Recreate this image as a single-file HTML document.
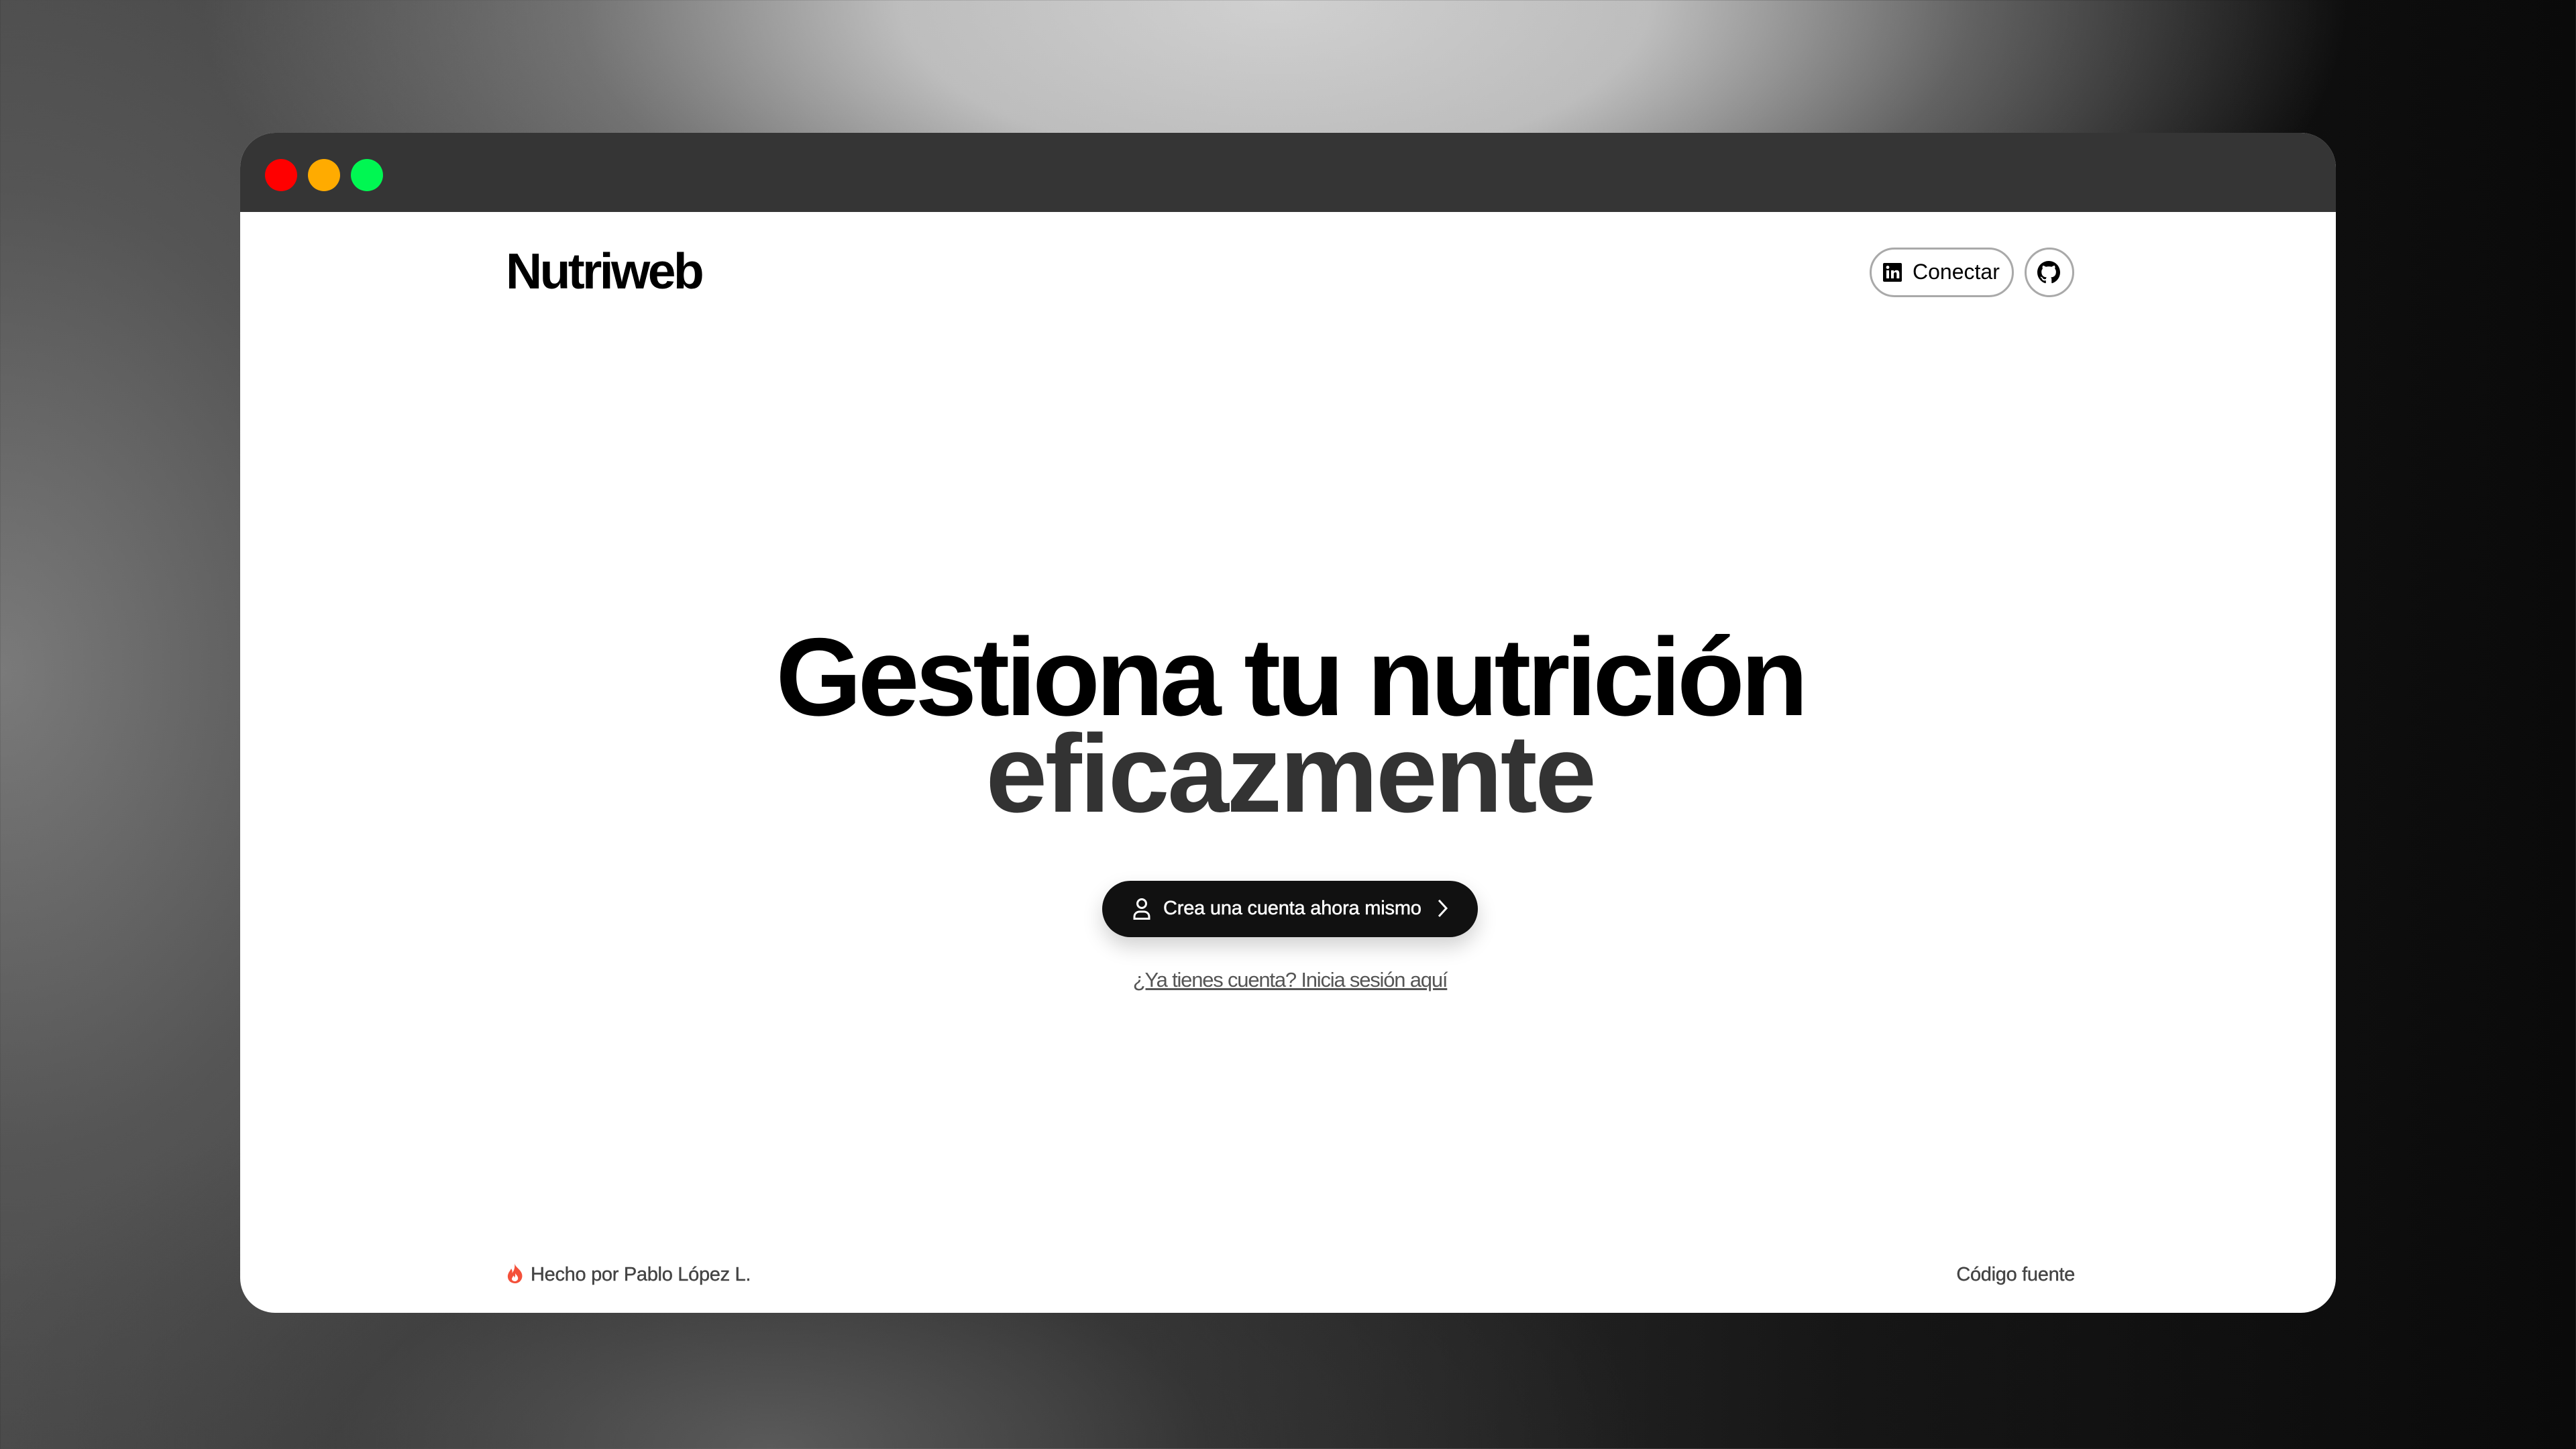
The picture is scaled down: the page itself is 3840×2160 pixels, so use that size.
<!DOCTYPE html>
<html><head><meta charset="utf-8"><style>
*{margin:0;padding:0;box-sizing:border-box}
html,body{width:3840px;height:2160px;overflow:hidden}
body{font-family:"Liberation Sans",Arial,sans-serif;position:relative;
background:
radial-gradient(ellipse 1600px 700px at 1900px 0px,#d0d0d0 0%,#bdbdbd 35%,rgba(150,150,150,0.6) 65%,rgba(120,120,120,0) 100%),
radial-gradient(ellipse 1300px 600px at 1150px 2160px,#5a5a5a 0%,rgba(60,60,60,0.5) 50%,rgba(30,30,30,0) 100%),
radial-gradient(ellipse 1200px 1600px at 0px 1000px,#7a7a7a 0%,#555 45%,rgba(40,40,40,0) 100%),
linear-gradient(90deg,#444 0%,#333 40%,#161616 72%,#0a0a0a 100%);}
.win{position:absolute;left:358px;top:198px;width:3124px;height:1759px;border-radius:52px;overflow:hidden;background:#fff}
.bar{position:absolute;left:0;top:0;width:100%;height:118px;background:#353535}
.dot{position:absolute;top:39px;width:48px;height:48px;border-radius:50%}
.a{position:absolute;white-space:nowrap}
</style></head><body>
<div class="win">
  <div class="bar">
    <div class="dot" style="left:37px;background:#ff0000"></div>
    <div class="dot" style="left:101px;background:#ffab00"></div>
    <div class="dot" style="left:165px;background:#00f752"></div>
  </div>
</div>

<div class="a" style="left:754px;top:367px;font-size:75px;line-height:75px;font-weight:bold;letter-spacing:-3.6px;color:#000">Nutriweb</div>

<div class="a" style="left:2787px;top:369px;width:215px;height:74px;border:3px solid #a9a9a9;border-radius:40px"></div>
<svg class="a" style="left:2807px;top:392px" width="28" height="28" viewBox="0 0 28 28">
  <rect x="0" y="0" width="28" height="28" rx="2" fill="#000"/>
  <rect x="5" y="11" width="4" height="12" fill="#fff"/>
  <circle cx="7" cy="6.5" r="2.4" fill="#fff"/>
  <path d="M12 11h4v2c1-1.6 2.5-2.3 4.3-2.3 3 0 4 2 4 5V23h-4v-6.5c0-1.6-.5-2.6-1.9-2.6-1.5 0-2.4 1-2.4 2.7V23h-4z" fill="#fff"/>
</svg>
<div class="a" style="left:2851px;top:389px;font-size:32px;line-height:32px;color:#000">Conectar</div>

<div class="a" style="left:3018px;top:369px;width:74px;height:74px;border:3px solid #a9a9a9;border-radius:50%"></div>
<svg class="a" style="left:3037px;top:389px" width="34" height="34" viewBox="0 0 16 16"><path fill="#000" d="M8 0C3.58 0 0 3.580 0 8c0 3.54 2.29 6.53 5.47 7.59.4.07.55-.17.55-.38 0-.19-.01-.82-.01-1.49-2.01.37-2.530-.49-2.69-.94-.09-.23-.48-.94-.82-1.13-.28-.15-.68-.52-.01-.53.63-.01 1.08.58 1.23.82.72 1.21 1.87.87 2.33.66.07-.52.28-.87.51-1.07-1.78-.2-3.64-.89-3.64-3.95 0-.87.31-1.59.82-2.15-.08-.2-.36-1.02.08-2.12 0 0 .67-.21 2.2.82.64-.18 1.32-.27 2-.27.68 0 1.36.09 2 .27 1.53-1.04 2.2-.82 2.2-.82.44 1.1.16 1.92.08 2.12.51.56.82 1.27.82 2.15 0 3.07-1.87 3.75-3.65 3.95.29.25.54.73.54 1.48 0 1.07-.01 1.93-.01 2.2 0 .21.15.46.55.38A8.013 8.013 0 0016 8c0-4.42-3.58-8-8-8z"/></svg>

<div class="a" style="left:3px;width:3840px;text-align:center;top:927px;font-size:165px;line-height:165px;font-weight:bold;letter-spacing:-6px;color:#000">Gestiona tu nutrición</div>
<div class="a" style="left:3px;width:3840px;text-align:center;top:1071px;font-size:165px;line-height:165px;font-weight:bold;letter-spacing:-3.4px;color:#333">eficazmente</div>

<div class="a" style="left:1643px;top:1313px;width:560px;height:84px;border-radius:42px;background:#111;box-shadow:0 14px 30px rgba(0,0,0,0.18)"></div>
<svg class="a" style="left:1688px;top:1338px" width="28" height="34" viewBox="0 0 28 34" fill="none" stroke="#fff" stroke-width="3">
  <circle cx="14" cy="9" r="6.5"/>
  <path d="M3 31.5v-3c0-4.5 3.5-7.5 8-7.5h6c4.5 0 8 3 8 7.5v3z"/>
</svg>
<div class="a" style="left:1734px;top:1340px;font-size:29px;line-height:29px;color:#fff;letter-spacing:-0.2px;-webkit-text-stroke:0.5px #fff">Crea una cuenta ahora mismo</div>
<svg class="a" style="left:2140px;top:1338px" width="20" height="32" viewBox="0 0 20 32" fill="none" stroke="#fff" stroke-width="3"><path d="M5 4l11 12-11 12"/></svg>

<div class="a" style="left:3px;width:3840px;text-align:center;top:1445px;font-size:31px;line-height:31px;color:#555;text-decoration:underline;letter-spacing:-1.2px">¿Ya tienes cuenta? Inicia sesión aquí</div>

<svg class="a" style="left:755px;top:1883px" width="26" height="30" viewBox="0 0 26 30">
  <path fill="#f4503a" d="M12 0c1 6 9 9 11 16 2 7-3 14-10 14S1 25 2 18c1-5 4-7 5-10 2 3 2 5 1 7 3-3 5-8 4-15z"/>
  <path fill="#fff" d="M13 15c2 3 5 5 4 9-1 2-3 3-4.5 3S8 26 8 23.5c0-2 2-3 2-5 1.5 1 2 2 1.5 3.5 1.5-1.5 2-4 1.5-7z"/>
</svg>
<div class="a" style="left:791px;top:1886px;font-size:29px;line-height:29px;color:#444;letter-spacing:-0.3px;-webkit-text-stroke:0.4px #444">Hecho por Pablo López L.</div>
<div class="a" style="left:2893px;top:1886px;width:200px;text-align:right;font-size:29px;line-height:29px;color:#444;letter-spacing:-0.3px;-webkit-text-stroke:0.4px #444">Código fuente</div>
</body></html>
